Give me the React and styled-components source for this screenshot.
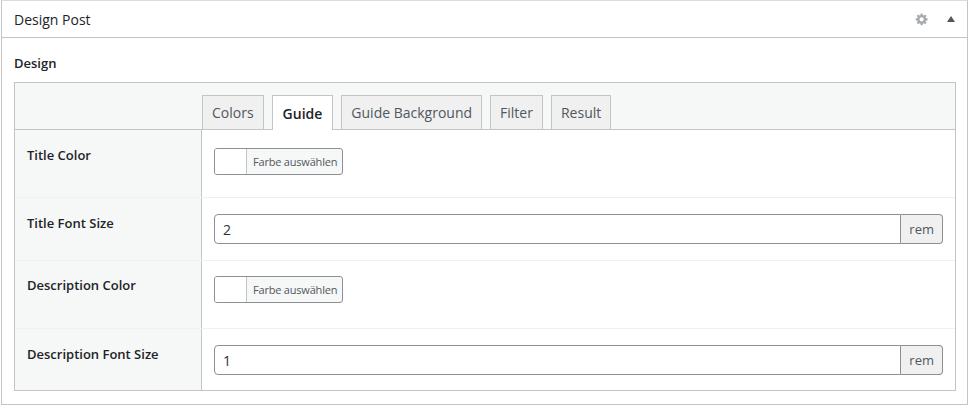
import React from "react";
import styled, { createGlobalStyle } from "styled-components";

const G = createGlobalStyle`
  body { margin: 0; background: #fff; font-family: "Open Sans", sans-serif; color: #1d2327; }
`;
const Box = styled.div`
  margin: 0 2px 0 1px; border: 1px solid #c3c4c7; border-top-color: #dcdcde; background: #fff; height: 405px; box-sizing: border-box;
`;
const Head = styled.div`
  height: 36px; border-bottom: 1px solid #c3c4c7; display: flex; align-items: center; padding: 0 12px; font-size: 14px;
`;
const Title = styled.div`flex: 1;`;
const Icons = styled.div`display: flex; align-items: center; gap: 18px; color: #8c8f94;`;
const Inside = styled.div`padding: 16px 10px 0 12px;`;
const H = styled.div`font-size: 13px; font-weight: 600; margin: 0 0 10px 0; line-height: 18px;`;
const Table = styled.div`border: 1px solid #c3c4c7; width: 942px; box-sizing: border-box;`;
const TabRow = styled.div`
  height: 46px; background: #f6f7f7; border-bottom: 1px solid #c3c4c7; display: flex; align-items: flex-end; padding-left: 187px; gap: 8px;
`;
const Tab = styled.div`
  box-sizing: border-box; padding: 0 ${p => p.$active ? 10 : 9}px; display: flex; align-items: center; font-size: 14px;
  border: 1px solid #c3c4c7; border-bottom: none; margin-bottom: ${p => p.$active ? "-1px" : "0"};
  height: ${p => p.$active ? "35px" : "34px"};
  background: ${p => p.$active ? "#fff" : "#f0f0f1"}; color: ${p => p.$active ? "#1d2327" : "#50575e"};
  font-weight: ${p => p.$active ? 600 : 400};
`;
const Row = styled.div`
  display: grid; grid-template-columns: 187px 1fr; height: ${p => p.$h}px;
  border-bottom: ${p => p.$last ? "none" : "1px solid #f0f0f1"};
`;
const Label = styled.div`
  background: #f6f7f7; border-right: 1px solid #c3c4c7; font-size: 13px; font-weight: 600; padding: ${p => p.$pt}px 12px 0; line-height: 18px;
`;
const Cell = styled.div`padding: ${p => p.$pt}px 12px 0 12px;`;
const ColorBtn = styled.div`
  display: inline-flex; height: 27px; box-sizing: border-box; border: 1px solid #8c8f94; border-radius: 3px; overflow: hidden; background: #f6f7f7;
`;
const Swatch = styled.div`width: 31px; background: #fff; border-right: 1px solid #c3c4c7;`;
const ColorText = styled.div`font-size: 11px; color: #50575e; padding: 0 5px 0 6px; display: flex; align-items: center; letter-spacing: -0.2px;`;
const Input = styled.div`display: flex; height: 30px;`;
const Field = styled.div`
  flex: 1; border: 1px solid #8c8f94; border-radius: 4px 0 0 4px; font-size: 14px; padding: 0 8px; display: flex; align-items: center; color: #2c3338;
`;
const Unit = styled.div`
  border: 1px solid #8c8f94; border-left: none; border-radius: 0 4px 4px 0; background: #f0f0f1; font-size: 13px; padding: 0 8px; display: flex; align-items: center; color: #50575e;
`;

const Gear = () => (
  <svg width="14" height="14" viewBox="0 0 20 20" fill="#a7aaad"><path d="M18 12h-2.18c-.17.7-.44 1.350-.81 1.93l1.54 1.54-2.1 2.1-1.54-1.54c-.58.36-1.23.63-1.910.79V19H8v-2.18c-.68-.16-1.33-.43-1.91-.79l-1.54 1.54-2.12-2.12 1.54-1.54c-.36-.58-.63-1.23-.79-1.91H1V9h2.18c.16-.68.43-1.33.79-1.91L2.43 5.55l2.1-2.1 1.54 1.54C6.65 4.62 7.3 4.35 8 4.18V2h3v2.18c.68.16 1.33.43 1.91.79l1.54-1.54 2.12 2.12-1.54 1.54c.36.59.64 1.24.8 1.91H18v3zm-8.5 1.5c1.66 0 3-1.34 3-3s-1.34-3-3-3-3 1.34-3 3 1.34 3 3 3z"/></svg>
);

export default function App() {
  const rows = [
    { l: "Title Color", t: "c", h: 67, pt: 18, lp: 16 },
    { l: "Title Font Size", t: "i", v: "2", h: 62, pt: 16, lp: 16 },
    { l: "Description Color", t: "c", h: 67, pt: 15, lp: 15 },
    { l: "Description Font Size", t: "i", v: "1", h: 61, pt: 16, lp: 16, last: true },
  ];
  return (
    <>
      <G />
      <Box>
        <Head>
          <Title>Design Post</Title>
          <Icons><Gear /><svg width="8" height="6" viewBox="0 0 8 6"><path d="M4 0L8 6H0z" fill="#50575e"/></svg></Icons>
        </Head>
        <Inside>
          <H>Design</H>
          <Table>
            <TabRow>
              {["Colors", "Guide", "Guide Background", "Filter", "Result"].map(t => (
                <Tab key={t} $active={t === "Guide"}>{t}</Tab>
              ))}
            </TabRow>
            {rows.map(r => (
              <Row key={r.l} $h={r.h} $last={r.last}>
                <Label $pt={r.lp}>{r.l}</Label>
                <Cell $pt={r.pt}>
                  {r.t === "c" ? (
                    <ColorBtn><Swatch /><ColorText>Farbe auswählen</ColorText></ColorBtn>
                  ) : (
                    <Input><Field>{r.v}</Field><Unit>rem</Unit></Input>
                  )}
                </Cell>
              </Row>
            ))}
          </Table>
        </Inside>
      </Box>
    </>
  );
}
